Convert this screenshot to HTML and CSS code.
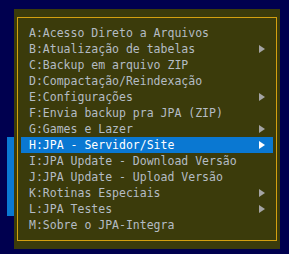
FILE: index.html
```html
<!DOCTYPE html>
<html lang="pt">
<head>
    <meta charset="UTF-8">
    <meta name="viewport" content="width=device-width, initial-scale=1.0">
    <title>Menu</title>
    <link rel="stylesheet" href="styles.css">
</head>
<body>

<div class="back-window"></div>

<div class="menu">
    <div class="frame">
        <div class="item"><span>A:Acesso Direto a Arquivos</span></div>
        <div class="item"><span>B:Atualização de tabelas</span><i class="arrow"></i></div>
        <div class="item"><span>C:Backup em arquivo ZIP</span></div>
        <div class="item"><span>D:Compactação/Reindexação</span></div>
        <div class="item"><span>E:Configurações</span><i class="arrow"></i></div>
        <div class="item"><span>F:Envia backup pra JPA (ZIP)</span></div>
        <div class="item"><span>G:Games e Lazer</span><i class="arrow"></i></div>
        <div class="item selected"><span>H:JPA - Servidor/Site</span><i class="arrow"></i></div>
        <div class="item"><span>I:JPA Update - Download Versão</span></div>
        <div class="item"><span>J:JPA Update - Upload Versão</span></div>
        <div class="item"><span>K:Rotinas Especiais</span><i class="arrow"></i></div>
        <div class="item"><span>L:JPA Testes</span><i class="arrow"></i></div>
        <div class="item"><span>M:Sobre o JPA-Integra</span></div>
    </div>
</div>

</body>
</html>
```

FILE: styles.css
```css
body {
    margin: 0;
    padding: 9px 0 0 14px;
    width: 289px;
    height: 254px;
    box-sizing: border-box;
    background-color: #00004f;
    font-family: "DejaVu Sans Mono", "Liberation Mono", monospace;
    font-size: 11.5px;
    overflow: hidden;
}
.back-window {
    position: absolute;
    left: 7px;
    top: 137px;
    width: 7px;
    height: 79px;
    background-color: #0a78d2;
}
.menu {
    position: relative;
    width: 266px;
    height: 240px;
    box-sizing: border-box;
    padding: 8px 3px;
    background-color: #3b3b0b;
}
.frame {
    height: 100%;
    box-sizing: border-box;
    border: 1px solid #d4a010;
    padding: 7px 3px 0 3px;
}
.item {
    display: flex;
    justify-content: space-between;
    align-items: center;
    height: 16px;
    padding: 0 8px;
    color: #b4bcc4;
    white-space: pre;
}
.item.selected {
    background-color: #0a78d2;
    color: #ffffff;
}
.arrow {
    width: 0;
    height: 0;
    border-top: 4px solid transparent;
    border-bottom: 4px solid transparent;
    border-left: 6px solid #a4a4a4;
}
.item.selected .arrow {
    border-left-color: #ffffff;
}
```
